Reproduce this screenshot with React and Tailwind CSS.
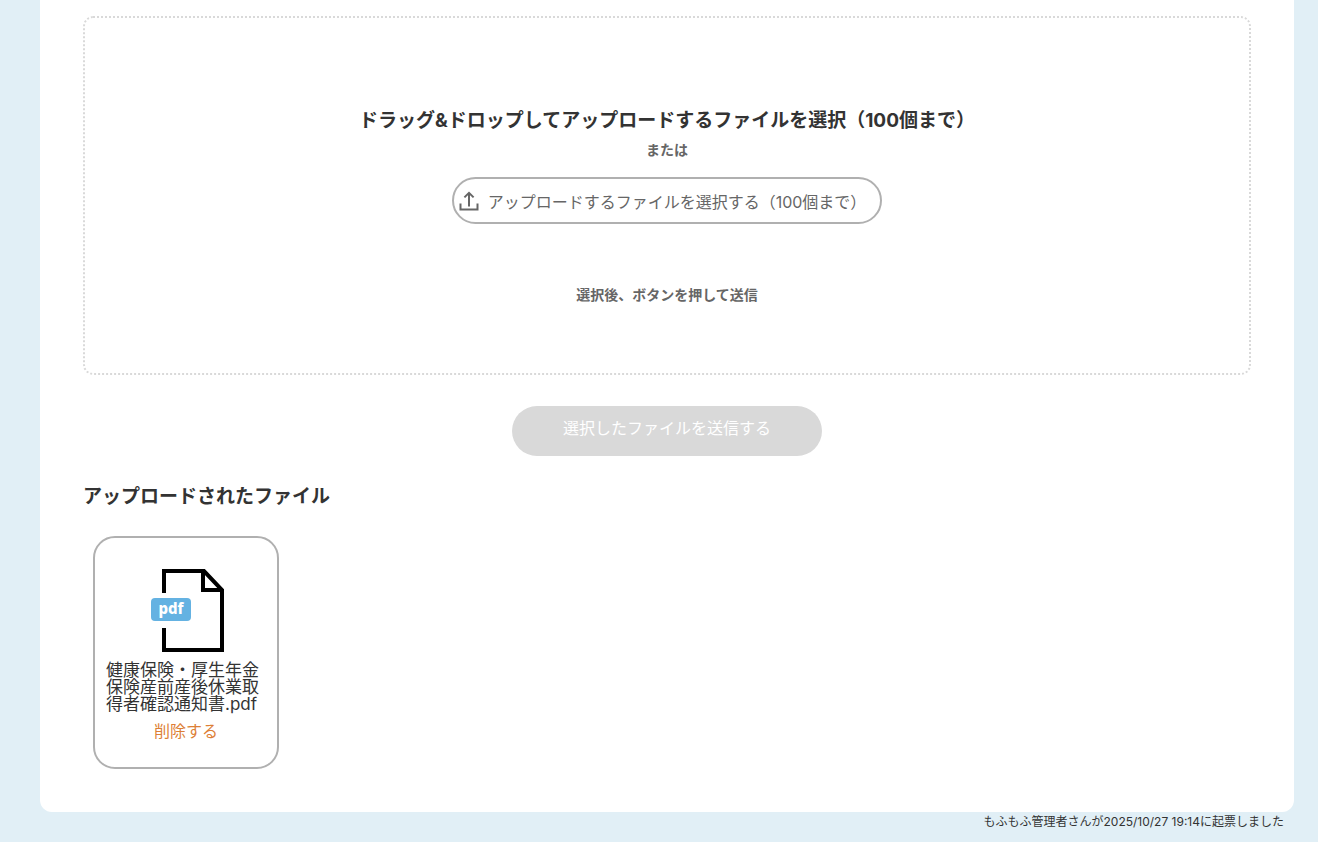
const uploadedFiles = [
  { id: 1, name: "健康保険・厚生年金保険産前産後休業取得者確認通知書.pdf", type: "pdf" },
];

const UploadIcon = () => (
  <svg width="20" height="20" viewBox="0 0 20 20" fill="none" stroke="#666666" strokeWidth="2" aria-hidden="true">
    <path d="M1.5 12.5V18.5H18.5V12.5" />
    <path d="M10 15.5V2" />
    <path d="M5.4 6.4L10 1.8L14.6 6.4" />
  </svg>
);

const FileIcon = ({ type }) => (
  <svg width="74" height="84" viewBox="0 0 74 84" fill="none" role="img" aria-label={type}>
    <path d="M13 24V2H53L71 21V81H13V59" stroke="#000" strokeWidth="4" />
    <path d="M52 2V21H72" stroke="#000" strokeWidth="4" />
    <rect x="0" y="29" width="40" height="23" rx="4" fill="#64b2e2" />
    <text x="20" y="45" textAnchor="middle" fill="#fff" fontSize="15" fontWeight="800" fontFamily="Noto Sans, sans-serif">
      {type}
    </text>
  </svg>
);

const FileCard = ({ file }) => (
  <li className="flex w-[186px] flex-col items-center rounded-[22px] border-2 border-[#b0b0b0] px-[11px] pt-[31px] pb-6">
    <div className="pl-1">
      <FileIcon type={file.type} />
    </div>
    <p className="mt-[9px] w-full text-[17px] leading-[17px] break-all text-[#333333]">{file.name}</p>
    <button type="button" className="mt-1.5 cursor-pointer text-base text-[#dd7f36]">
      削除する
    </button>
  </li>
);

const App = () => {
  return (
    <div className="min-h-screen bg-[#e1eff6] pr-6 pl-10 font-['Inter','Noto_Sans_CJK_JP',sans-serif] text-[#333333]">
      <main className="rounded-b-xl bg-white px-[43px] pt-4 pb-[43px]">
        <section className="flex flex-col items-center rounded-[10px] border-2 border-dotted border-[#d9d9d9] pt-[89px] pb-[66px] text-center">
          <h2 className="text-[19px] leading-7 font-bold">
            ドラッグ&amp;ドロップしてアップロードするファイルを選択（100個まで）
          </h2>
          <p className="mt-[3px] text-sm leading-6 font-bold text-[#666666]">または</p>
          <button
            type="button"
            className="mt-[15px] flex h-[47px] w-[430px] cursor-pointer items-center rounded-full border-2 border-[#b0b0b0] px-[5px] text-base text-[#666666]"
          >
            <UploadIcon />
            <span className="flex-1 pt-0.5">アップロードするファイルを選択する（100個まで）</span>
          </button>
          <p className="mt-[59px] text-sm leading-6 font-bold text-[#666666]">選択後、ボタンを押して送信</p>
        </section>

        <button
          type="button"
          disabled
          className="mx-auto mt-[31px] flex h-[50px] w-[310px] justify-center rounded-full bg-[#d9d9d9] pt-2.5 text-base text-white"
        >
          選択したファイルを送信する
        </button>

        <h2 className="mt-[27px] text-[19px] leading-7 font-bold">アップロードされたファイル</h2>
        <ul className="mt-[25px] flex flex-wrap gap-5 px-2.5">
          {uploadedFiles.map((file) => (
            <FileCard key={file.id} file={file} />
          ))}
        </ul>
      </main>
      <footer className="pr-2.5 text-right text-xs leading-5">
        もふもふ管理者さんが2025/10/27 19:14に起票しました
      </footer>
    </div>
  );
};

export default App;
